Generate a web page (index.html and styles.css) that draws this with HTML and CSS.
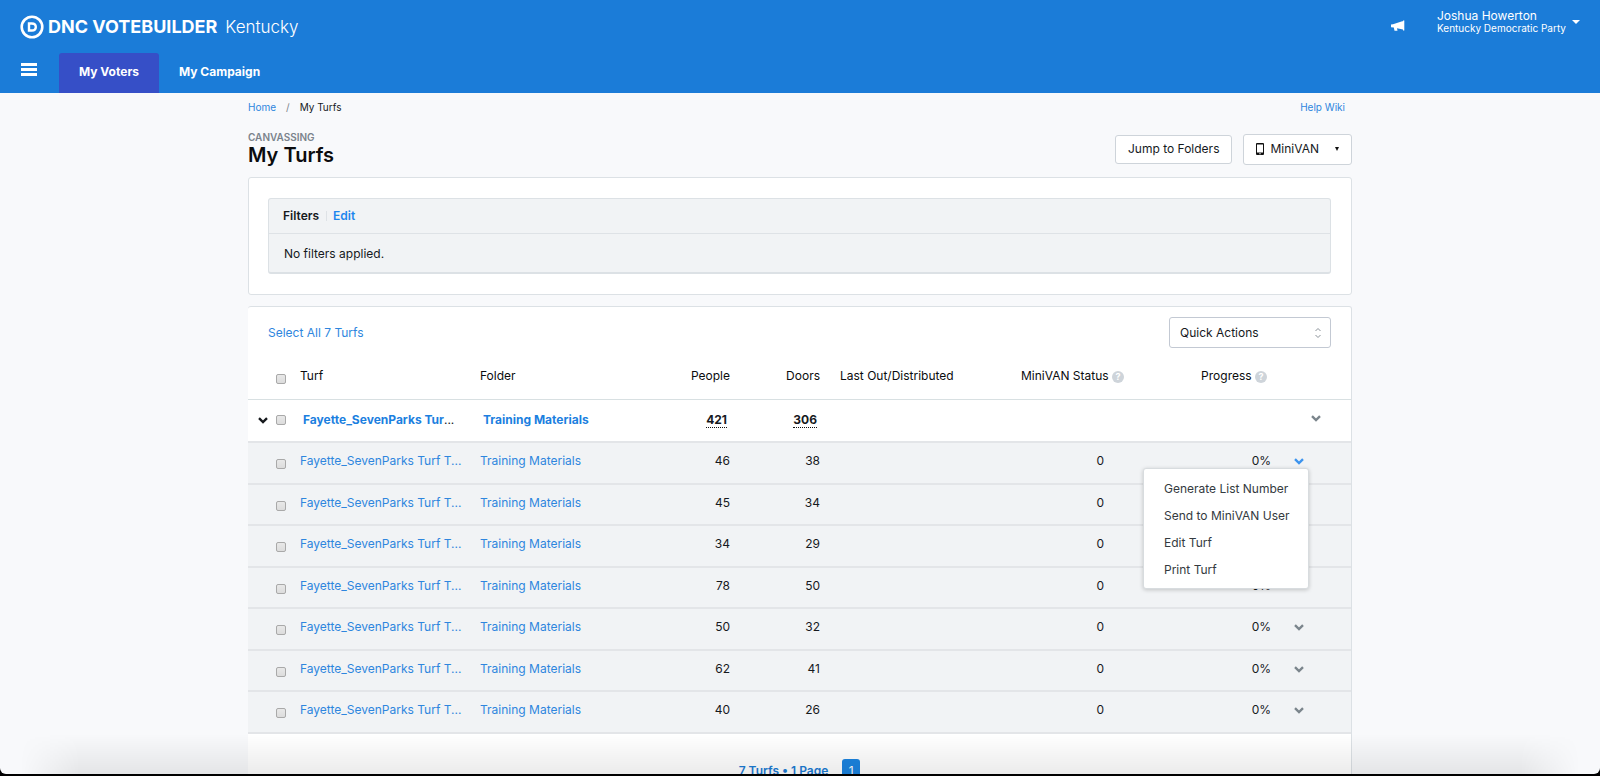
FILE: index.html
```html
<!DOCTYPE html>
<html lang="en">

<head>
    <meta charset="UTF-8">
    <meta name="viewport" content="width=device-width, initial-scale=1.0">
    <title>My Turfs</title>
    <link rel="stylesheet" href="styles.css">
</head>

<body>
    <!-- icons used more than once -->
    <svg class="sprite" aria-hidden="true">
        <symbol id="chevron" viewBox="0 0 10 7">
            <path d="M1 1.2 L5 5 L9 1.2" fill="none" stroke="currentColor" stroke-width="2.4" />
        </symbol>
    </svg>

    <div class="page">
        <header class="header">
            <div class="header-top">
                <a class="brand" href="#">
                    <svg class="brand-logo" viewBox="0 0 24 24" aria-hidden="true">
                        <circle cx="12" cy="12" r="10.3" fill="none" stroke="#fff" stroke-width="2.6" />
                        <path d="M9 8.500 H11.800 C14.400 8.500 15.800 9.900 15.800 12 C15.800 14.100 14.400 15.500 11.800 15.500 H9 Z" fill="none" stroke="#fff" stroke-width="2.4" />
                    </svg>
                    <span class="brand-name">DNC VOTEBUILDER</span>
                    <span class="brand-state">Kentucky</span>
                </a>
                <div class="account">
                    <button class="announce" type="button" aria-label="Announcements">
                        <svg viewBox="0 0 14 12" width="14" height="12" aria-hidden="true">
                            <path d="M0 4.500 L2 4.200 L12 1 V9.500 L6 8.200 L6.500 10.800 H3.500 L2.800 7.600 L0 7.200 Z M12 0.500 H13.300 V10.500 H12 Z" fill="#fff" />
                        </svg>
                    </button>
                    <button class="user" type="button">
                        <span class="user-text">
                            <span class="user-name">Joshua Howerton</span>
                            <span class="user-org">Kentucky Democratic Party</span>
                        </span>
                        <span class="user-caret"></span>
                    </button>
                </div>
            </div>
            <nav class="nav">
                <button class="menu-button" type="button" aria-label="Menu">
                    <span></span>
                    <span></span>
                    <span></span>
                </button>
                <a class="tab tab-active" href="#">My Voters</a>
                <a class="tab" href="#">My Campaign</a>
            </nav>
        </header>

        <main class="container">
            <div class="crumbs">
                <div class="crumbs-path">
                    <a href="#">Home</a>
                    <span class="crumbs-slash">/</span>
                    <span>My Turfs</span>
                </div>
                <a class="help-link" href="#">Help Wiki</a>
            </div>

            <div class="title-row">
                <div>
                    <div class="section-name">CANVASSING</div>
                    <h1>My Turfs</h1>
                </div>
                <div class="title-buttons">
                    <button class="btn" type="button">Jump to Folders</button>
                    <button class="btn btn-minivan" type="button">
                        <svg viewBox="0 0 8 12" width="8" height="12" aria-hidden="true">
                            <path d="M1 0 H7 Q8 0 8 1 V11 Q8 12 7 12 H1 Q0 12 0 11 V1 Q0 0 1 0 Z M1 1.500 V9.600 H7 V1.500 Z M3.300 10.200 V11.200 H4.700 V10.200 Z" fill="#111" fill-rule="evenodd" />
                        </svg>
                        MiniVAN
                        <span class="btn-caret"></span>
                    </button>
                </div>
            </div>

            <section class="panel filter-panel">
                <div class="filters">
                    <div class="filters-head">
                        <strong>Filters</strong>
                        <a href="#">Edit</a>
                    </div>
                    <div class="filters-body">No filters applied.</div>
                </div>
            </section>

            <section class="panel turf-panel">
                <div class="toolbar">
                    <a href="#">Select All 7 Turfs</a>
                    <div class="select-wrap">
                        <select class="quick-actions" aria-label="Quick Actions">
                            <option>Quick Actions</option>
                        </select>
                        <svg class="select-arrows" viewBox="0 0 8 12" width="8" height="12" aria-hidden="true">
                            <path d="M1.500 4 L4 1.500 L6.500 4 M1.500 8 L4 10.500 L6.500 8" fill="none" stroke="#8b9299" stroke-width="1" />
                        </svg>
                    </div>
                </div>

                <table class="turfs">
                    <colgroup>
                        <col class="col-check">
                        <col class="col-turf">
                        <col class="col-folder">
                        <col class="col-people">
                        <col class="col-doors">
                        <col class="col-last">
                        <col class="col-status">
                        <col class="col-progress">
                        <col class="col-menu">
                    </colgroup>
                    <thead>
                        <tr>
                            <th class="check"><input type="checkbox" aria-label="Select all"></th>
                            <th>Turf</th>
                            <th>Folder</th>
                            <th class="num">People</th>
                            <th class="num">Doors</th>
                            <th class="last">Last Out/Distributed</th>
                            <th class="help-col">MiniVAN Status <span class="help">?</span></th>
                            <th class="help-col progress">Progress <span class="help">?</span></th>
                            <th></th>
                        </tr>
                    </thead>
                    <tbody>
                        <tr class="group">
                            <td class="check">
                                <button class="toggle" type="button" aria-label="Collapse"><svg><use href="#chevron" /></svg></button>
                                <input type="checkbox" aria-label="Select group">
                            </td>
                            <td class="name"><a href="#">Fayette_SevenParks Tur</a><span class="dots">...</span></td>
                            <td class="name"><a href="#">Training Materials</a></td>
                            <td class="num"><span class="total">421</span></td>
                            <td class="num"><span class="total">306</span></td>
                            <td></td>
                            <td></td>
                            <td></td>
                            <td class="menu-cell"><button class="row-menu" type="button" aria-label="Actions"><svg><use href="#chevron" /></svg></button></td>
                        </tr>
                        <tr>
                            <td class="check"><input type="checkbox" aria-label="Select turf"></td>
                            <td class="name"><a href="#">Fayette_SevenParks Turf T...</a></td>
                            <td><a href="#">Training Materials</a></td>
                            <td class="num">46</td>
                            <td class="num">38</td>
                            <td></td>
                            <td class="num status">0</td>
                            <td class="num">0%</td>
                            <td class="menu-cell">
                                <button class="row-menu row-menu-open" type="button" aria-label="Actions"><svg><use href="#chevron" /></svg></button>
                                <ul class="dropdown">
                                    <li><button type="button">Generate List Number</button></li>
                                    <li><button type="button">Send to MiniVAN User</button></li>
                                    <li><button type="button">Edit Turf</button></li>
                                    <li><button type="button">Print Turf</button></li>
                                </ul>
                            </td>
                        </tr>
                        <tr>
                            <td class="check"><input type="checkbox" aria-label="Select turf"></td>
                            <td class="name"><a href="#">Fayette_SevenParks Turf T...</a></td>
                            <td><a href="#">Training Materials</a></td>
                            <td class="num">45</td>
                            <td class="num">34</td>
                            <td></td>
                            <td class="num status">0</td>
                            <td class="num"></td>
                            <td class="menu-cell"></td>
                        </tr>
                        <tr>
                            <td class="check"><input type="checkbox" aria-label="Select turf"></td>
                            <td class="name"><a href="#">Fayette_SevenParks Turf T...</a></td>
                            <td><a href="#">Training Materials</a></td>
                            <td class="num">34</td>
                            <td class="num">29</td>
                            <td></td>
                            <td class="num status">0</td>
                            <td class="num"></td>
                            <td class="menu-cell"></td>
                        </tr>
                        <tr>
                            <td class="check"><input type="checkbox" aria-label="Select turf"></td>
                            <td class="name"><a href="#">Fayette_SevenParks Turf T...</a></td>
                            <td><a href="#">Training Materials</a></td>
                            <td class="num">78</td>
                            <td class="num">50</td>
                            <td></td>
                            <td class="num status">0</td>
                            <td class="num">0%</td>
                            <td class="menu-cell"></td>
                        </tr>
                        <tr>
                            <td class="check"><input type="checkbox" aria-label="Select turf"></td>
                            <td class="name"><a href="#">Fayette_SevenParks Turf T...</a></td>
                            <td><a href="#">Training Materials</a></td>
                            <td class="num">50</td>
                            <td class="num">32</td>
                            <td></td>
                            <td class="num status">0</td>
                            <td class="num">0%</td>
                            <td class="menu-cell"><button class="row-menu" type="button" aria-label="Actions"><svg><use href="#chevron" /></svg></button></td>
                        </tr>
                        <tr>
                            <td class="check"><input type="checkbox" aria-label="Select turf"></td>
                            <td class="name"><a href="#">Fayette_SevenParks Turf T...</a></td>
                            <td><a href="#">Training Materials</a></td>
                            <td class="num">62</td>
                            <td class="num">41</td>
                            <td></td>
                            <td class="num status">0</td>
                            <td class="num">0%</td>
                            <td class="menu-cell"><button class="row-menu" type="button" aria-label="Actions"><svg><use href="#chevron" /></svg></button></td>
                        </tr>
                        <tr>
                            <td class="check"><input type="checkbox" aria-label="Select turf"></td>
                            <td class="name"><a href="#">Fayette_SevenParks Turf T...</a></td>
                            <td><a href="#">Training Materials</a></td>
                            <td class="num">40</td>
                            <td class="num">26</td>
                            <td></td>
                            <td class="num status">0</td>
                            <td class="num">0%</td>
                            <td class="menu-cell"><button class="row-menu" type="button" aria-label="Actions"><svg><use href="#chevron" /></svg></button></td>
                        </tr>
                    </tbody>
                </table>

                <div class="pager">
                    <span>7 Turfs • 1 Page</span>
                    <button class="pager-page" type="button">1</button>
                </div>
            </section>
        </main>
        <div class="page-fade"></div>
    </div>
</body>

</html>
```
FILE: styles.css
```css
* {
    box-sizing: border-box;
    margin: 0;
    padding: 0;
}

body {
    height: 100vh;
    overflow: hidden;
    padding-bottom: 2px;
    background-color: #000;
    color: #16191d;
    font-family: Inter, "Liberation Sans", sans-serif;
    font-size: 12px;
    line-height: 16px;
}

a {
    color: #2e86de;
    text-decoration: none;
}

button,
select,
input {
    font: inherit;
    color: inherit;
}

button {
    border: 0;
    background: none;
    cursor: pointer;
}

.sprite {
    position: absolute;
    width: 0;
    height: 0;
}

.page {
    position: relative;
    height: 100%;
    overflow: hidden;
    border-radius: 0 0 6px 6px;
    background-color: #f8f9fb;
}

/* header */
.header {
    background-color: #1b7cd8;
    color: #fff;
}

.header-top {
    display: flex;
    justify-content: space-between;
    height: 53px;
    padding: 0 20px;
}

.brand {
    display: flex;
    align-items: center;
    color: #fff;
}

.brand-logo {
    width: 24px;
    height: 24px;
}

.brand-name {
    margin-left: 4px;
    font-size: 18px;
    font-weight: 700;
}

.brand-state {
    margin-left: 8px;
    font-size: 17px;
    font-weight: 300;
}

.account {
    display: flex;
    align-items: flex-start;
    gap: 32px;
    padding-top: 10px;
}

.announce {
    display: flex;
    padding-top: 10px;
}

.user {
    display: flex;
    align-items: center;
    gap: 6px;
    text-align: left;
}

.user-text span {
    display: block;
    line-height: 12px;
}

.user-org {
    font-size: 10px;
}

.user-caret {
    border: 4px solid transparent;
    border-top: 4px solid #fff;
    border-bottom: 0;
}

.nav {
    display: flex;
    height: 40px;
    padding-left: 21px;
    font-weight: 700;
}

.menu-button {
    display: flex;
    flex-direction: column;
    gap: 2px;
    width: 38px;
    padding-top: 10px;
}

.menu-button span {
    width: 16px;
    height: 3px;
    background-color: #fff;
}

.tab {
    padding: 11px 20px;
    color: #fff;
}

.tab-active {
    border-radius: 3px 3px 0 0;
    background-color: #364fc7;
}

/* content */
.container {
    max-width: 1104px;
    margin: 0 auto;
}

.crumbs {
    display: flex;
    justify-content: space-between;
    padding: 6px 7px 0 0;
    font-size: 10px;
}

.crumbs-path {
    display: flex;
    gap: 10px;
}

.crumbs-slash {
    color: #7b838c;
}

.title-row {
    display: flex;
    justify-content: space-between;
    margin: 16px 0 10px;
}

.section-name {
    font-size: 10px;
    line-height: 12px;
    font-weight: 600;
    color: #7b838c;
}

h1 {
    font-size: 20px;
    line-height: 24px;
    font-weight: 600;
    color: #0b0c0e;
}

.title-buttons {
    display: flex;
    align-items: center;
    gap: 11px;
}

.btn {
    display: flex;
    align-items: center;
    height: 29px;
    padding: 0 12px;
    border: 1px solid #ced4da;
    border-radius: 3px;
    background-color: #fff;
}

.btn-minivan {
    gap: 6px;
    height: 31px;
}

.btn-caret {
    margin-left: 10px;
    border: 2px solid transparent;
    border-top: 4px solid #111;
    border-bottom: 0;
}

.panel {
    border: 1px solid #dce1e5;
    border-radius: 3px;
    background-color: #fff;
}

.filter-panel {
    margin-bottom: 11px;
    padding: 20px 20px 20px 19px;
}

.turf-panel {
    border-left: 0;
}

.filters {
    border: 1px solid #dce1e5;
    border-bottom-width: 2px;
    border-radius: 3px;
    background-color: #f1f3f5;
}

.filters-head {
    display: flex;
    align-items: center;
    gap: 7px;
    height: 35px;
    padding-left: 14px;
    border-bottom: 1px solid #dee2e6;
}

.filters-head strong {
    font-weight: 600;
}

.filters-head a {
    padding-left: 6px;
    border-left: 1px solid #dee2e6;
    line-height: 10px;
    font-weight: 600;
    color: #1c86ee;
}

.filters-body {
    padding: 12px 15px 10px;
}

.toolbar {
    display: flex;
    align-items: center;
    justify-content: space-between;
    padding: 10px 20px 0;
}

.select-wrap {
    position: relative;
    width: 162px;
}

.quick-actions {
    appearance: none;
    display: block;
    width: 100%;
    height: 31px;
    padding: 0 10px;
    border: 1px solid #c3c9d3;
    border-radius: 3px;
    background-color: #fff;
}

.select-arrows {
    position: absolute;
    top: 10px;
    right: 9px;
}

/* turf table */
.turfs {
    width: 100%;
    table-layout: fixed;
    border-collapse: collapse;
}

.col-check {
    width: 52px;
}

.col-turf {
    width: 180px;
}

.col-folder {
    width: 180px;
}

.col-people {
    width: 70px;
}

.col-doors {
    width: 90px;
}

.col-status {
    width: 130px;
}

.col-progress {
    width: 147px;
}

.col-menu {
    width: 80px;
}

.turfs th {
    height: 51px;
    padding-top: 6px;
    border-bottom: 1px solid #d8e0e2;
    font-weight: 400;
    text-align: left;
    color: #0b0c0e;
}

.turfs td {
    height: 42px;
    padding-bottom: 4px;
    border-bottom: 2px solid #e3e5e8;
    background-color: #f1f3f5;
}

.turfs tr:nth-child(odd):not(.group) td {
    height: 41px;
}

.turfs .check {
    padding-right: 14px;
    text-align: right;
}

.turfs input {
    appearance: none;
    vertical-align: -4px;
    width: 10px;
    height: 10px;
    border: 1px solid #a9a9a9;
    border-radius: 2px;
    background-image: linear-gradient(#e8e8e8, #dcdcdc);
}

.turfs .name {
    white-space: nowrap;
}

.turfs .num {
    text-align: right;
}

.turfs .last {
    padding-left: 20px;
}

.turfs .help-col {
    text-align: right;
}

.turfs .progress {
    padding-right: 4px;
}

.turfs .status {
    padding-right: 20px;
}

.help {
    display: inline-block;
    width: 12px;
    height: 12px;
    border-radius: 50%;
    background-color: #ced4da;
    color: #fff;
    font-size: 9px;
    line-height: 12px;
    font-weight: 700;
    text-align: center;
}

.turfs .group td {
    height: 43px;
    padding-bottom: 0;
    background-color: #fff;
    font-weight: 700;
}

.turfs .group .name {
    padding-left: 3px;
}

.group a {
    color: #1c7fe0;
}

.group .dots {
    font-weight: 400;
}

.turfs .group .num {
    padding-right: 3px;
}

.turfs .group input {
    vertical-align: -1px;
}

.total {
    border-bottom: 1px dotted #111;
}

.toggle svg,
.row-menu svg {
    display: block;
    width: 10px;
    height: 7px;
}

.toggle {
    display: inline-block;
    margin-right: 5px;
}

.menu-cell {
    position: relative;
    padding-left: 23px;
    color: #7b858c;
}

.turfs .group .menu-cell {
    padding-left: 40px;
    padding-bottom: 4px;
}

.row-menu-open {
    color: #3d94ee;
}

.dropdown {
    position: absolute;
    z-index: 2;
    top: 25px;
    right: 42px;
    width: 166px;
    padding: 6px 0 5px;
    border: 1px solid #d8dcdf;
    border-radius: 3px;
    background-color: #fff;
    box-shadow: 0 1px 4px rgba(0, 0, 0, .2);
    list-style: none;
    color: #343a40;
}

.dropdown button {
    display: block;
    width: 100%;
    height: 27px;
    padding: 0 20px;
    text-align: left;
    white-space: nowrap;
}

.pager {
    display: flex;
    align-items: center;
    justify-content: center;
    gap: 14px;
    padding: 25px 0;
    font-weight: 600;
    color: #1c7cd5;
}

.pager-page {
    width: 18px;
    height: 24px;
    border-radius: 3px;
    background-color: #1c84e0;
    color: #fff;
    font-weight: 400;
}

/* shadow along the bottom edge */
.page-fade {
    position: absolute;
    right: 0;
    bottom: 0;
    left: 0;
    height: 40px;
    background-image: linear-gradient(rgba(0, 0, 0, 0), rgba(0, 0, 0, .08));
    mask-image: linear-gradient(to right, transparent 20px, #000 80px, #000 calc(100% - 80px), transparent calc(100% - 20px));
    pointer-events: none;
}
```
